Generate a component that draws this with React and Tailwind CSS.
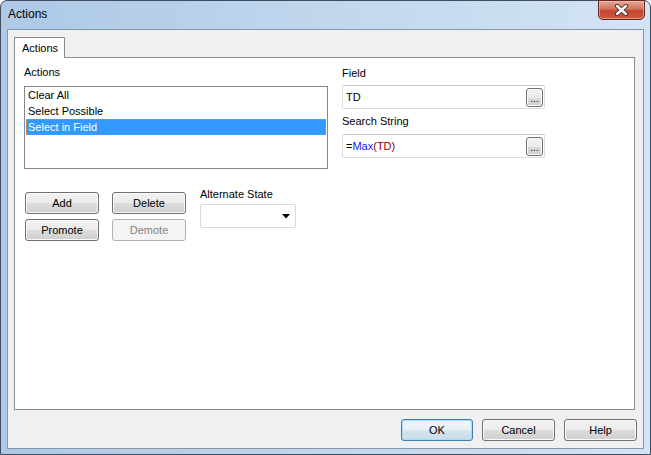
import React from "react";

const btn =
  "flex items-center justify-center h-[22px] rounded-[3px] border border-[#707070] bg-[linear-gradient(#f2f2f2,#ebebeb_50%,#dddddd_50%,#cfcfcf)] shadow-[inset_0_0_0_1px_#fbfbfb] text-[11px] text-black";

const okBtn =
  "flex items-center justify-center h-[22px] w-[72px] rounded-[3px] border border-[#3c7fb1] bg-[linear-gradient(#f0f6fa,#e6f0f6_50%,#d7e6ef_50%,#c9dce8)] shadow-[inset_0_0_0_1px_#a9dcf5] text-[11px] text-black";

function Ellipsis() {
  return (
    <div className="flex items-end justify-center w-[17px] h-[19px] rounded-[3px] border border-[#707070] bg-[linear-gradient(#f2f2f2,#ebebeb_50%,#dddddd_50%,#cfcfcf)] shadow-[inset_0_0_0_1px_#fbfbfb] text-[10px] leading-[12px] pb-[1px]">
      ...
    </div>
  );
}

function CloseButton() {
  return (
    <div className="-mt-px flex items-center justify-center w-[47px] h-[20px] rounded-b-[5px] border border-[#5e2a22] bg-[linear-gradient(#e9a99a,#d0705c_45%,#c2442f_55%,#d45a3f)] shadow-[inset_0_0_0_1px_rgba(255,200,190,0.5)]">
      <svg width="15" height="12" viewBox="0 0 15 12">
        <path d="M3 2 L12 10 M12 2 L3 10" stroke="#3a2a28" strokeWidth="4.2" strokeLinecap="round" />
        <path d="M3 2 L12 10 M12 2 L3 10" stroke="#ffffff" strokeWidth="2.4" strokeLinecap="round" />
      </svg>
    </div>
  );
}

export default function App() {
  const items = ["Clear All", "Select Possible", "Select in Field"];

  return (
    <div className="w-[651px] h-[455px] bg-white font-['Liberation_Sans',Arial,sans-serif] text-black antialiased">
      <div className="flex flex-col w-[651px] h-[455px] rounded-t-[7px] border border-[#3f4d5e] bg-[linear-gradient(to_right,#adc9e6,#c2d8ee_55%,#d3e4f5)]">
        {/* title bar */}
        <div className="flex items-start h-[28px]">
          <div className="pl-[7px] pt-[5px] text-[12px] leading-[16px] text-black">Actions</div>
          <div className="flex-1" />
          <div className="mr-[5px]">
            <CloseButton />
          </div>
        </div>

        {/* client area */}
        <div className="flex flex-col mx-[6px] w-[637px] h-[420px] border border-[#8795a8] bg-[#f0f0f0] pl-[6px] pt-[7px]">
          <div className="relative z-10 flex items-center w-[51px] h-[21px] -mb-px border border-b-0 border-[#898c95] bg-white pl-[7px] text-[11px]">
            Actions
          </div>

          <div className="flex w-[621px] h-[353px] border border-[#898c95] bg-white pl-[9px] pt-[7px] gap-[14px]">
            {/* left column */}
            <div className="flex flex-col w-[304px]">
              <div className="h-[14px] leading-[14px] text-[11px]">Actions</div>
              <div className="mt-[7px] h-[83px] border border-[#828790] px-px text-[11px]">
                {items.map((it, i) =>
                  i === 2 ? (
                    <div
                      key={it}
                      className="h-[16px] leading-[14px] pl-[1px] bg-[#3399ff] text-white border border-dotted border-[#d9893a]"
                    >
                      {it}
                    </div>
                  ) : (
                    <div key={it} className="h-[16px] leading-[16px] pl-[2px]">
                      {it}
                    </div>
                  )
                )}
              </div>

              <div className="flex mt-[23px] pl-px">
                <div className="grid grid-cols-[74px_74px] gap-x-[13px] gap-y-[5px]">
                  <div className={btn}>Add</div>
                  <div className={btn}>Delete</div>
                  <div className={btn}>Promote</div>
                  <div className="flex items-center justify-center h-[22px] rounded-[3px] border border-[#adb2b5] bg-[#f4f4f4] text-[11px] text-[#838383]">
                    Demote
                  </div>
                </div>
                <div className="flex flex-col ml-[14px] -mt-[5px]">
                  <div className="h-[14px] leading-[14px] text-[11px]">Alternate State</div>
                  <div className="flex items-center justify-end mt-[3px] w-[96px] h-[24px] rounded-[2px] border border-[#d9d9d9] bg-white pr-[5px]">
                    <svg width="8" height="5" viewBox="0 0 8 5">
                      <path d="M0 0 H8 L4 4.5 Z" fill="#000" />
                    </svg>
                  </div>
                </div>
              </div>
            </div>

            {/* right column */}
            <div className="flex flex-col w-[203px] pt-px">
              <div className="h-[14px] leading-[14px] text-[11px]">Field</div>
              <div className="flex items-center mt-[5px] h-[24px] rounded-[2px] border border-[#dcdcdc] border-t-[#c9c9c9] bg-white pl-[3px] pr-[1px]">
                <div className="flex-1 text-[11px]">TD</div>
                <Ellipsis />
              </div>
              <div className="mt-[5px] h-[14px] leading-[14px] text-[11px]">Search String</div>
              <div className="flex items-center mt-[6px] h-[24px] rounded-[2px] border border-[#dcdcdc] border-t-[#c9c9c9] bg-white pl-[3px] pr-[1px]">
                <div className="flex-1 text-[11px]">
                  =<span className="text-[#2020ff]">Max</span>
                  <span className="text-[#8b0000]">(TD)</span>
                </div>
                <Ellipsis />
              </div>
            </div>
          </div>

          {/* dialog buttons */}
          <div className="flex justify-end gap-[9px] mt-[9px] pr-[6px]">
            <div className={okBtn}>OK</div>
            <div className={btn + " w-[73px]"}>Cancel</div>
            <div className={btn + " w-[73px]"}>Help</div>
          </div>
        </div>
      </div>
    </div>
  );
}
